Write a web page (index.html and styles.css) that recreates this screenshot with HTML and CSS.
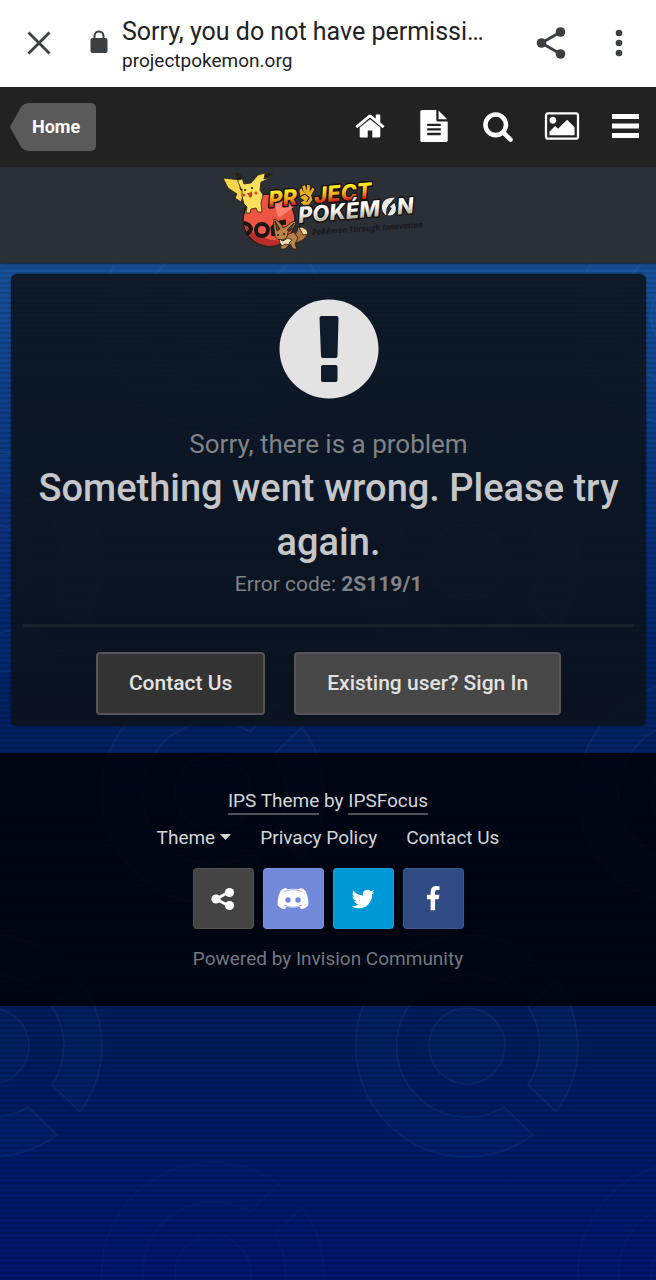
FILE: index.html
```html
<!DOCTYPE html>
<html lang="en">
<head>
<meta charset="utf-8">
<meta name="viewport" content="width=device-width, initial-scale=1">
<title>Sorry, you do not have permission</title>
<link rel="stylesheet" href="styles.css">
</head>
<body>
<header class="browser-bar">
  <button class="bar-button" aria-label="Close"><svg width="24" height="24" viewBox="0 0 24 24"><path d="M1.500 1.500 22.500 22.500M22.500 1.500 1.500 22.500" stroke="currentColor" stroke-width="2.800"/></svg></button>
  <svg class="lock" width="18" height="24" viewBox="0 0 18 24"><rect x="0.500" y="8" width="17" height="15" rx="2" fill="currentColor"/><path d="M4.500 9V6a4.500 4.500 0 0 1 9 0v3" fill="none" stroke="currentColor" stroke-width="2"/></svg>
  <div class="address">
    <span class="page-title">Sorry, you do not have permissi…</span>
    <span class="page-host">projectpokemon.org</span>
  </div>
  <button class="bar-button share" aria-label="Share"><svg width="30" height="34" viewBox="0 0 30 34" fill="currentColor"><path d="M5.500 17 24.500 6M5.500 17 24.500 28" stroke="currentColor" stroke-width="2.800"/><circle cx="5.500" cy="17" r="4.800"/><circle cx="24.500" cy="6" r="4.800"/><circle cx="24.500" cy="28" r="4.800"/></svg></button>
  <button class="bar-button" aria-label="More options"><svg width="8" height="28" viewBox="0 0 8 28" fill="currentColor"><circle cx="4" cy="4" r="3.300"/><circle cx="4" cy="14" r="3.300"/><circle cx="4" cy="24" r="3.300"/></svg></button>
</header>
<div class="site">
  <svg class="pattern" aria-hidden="true">
    <defs>
      <g id="ball">
        <circle r="38"/>
        <path d="M37 61 66 89A111 111 0 1 1 66-89L37-61A71 71 0 1 0 37 61Z"/>
        <path d="M61 39 89 66A111 111 0 0 0 89-66L61-39A71 71 0 0 1 61 39Z"/>
      </g>
    </defs>
    <use href="#ball" x="213" y="229"/><use href="#ball" x="689" y="229"/>
    <use href="#ball" x="-9" y="475"/><use href="#ball" x="467" y="475"/>
    <use href="#ball" x="213" y="706"/><use href="#ball" x="689" y="706"/>
    <use href="#ball" x="-9" y="959"/><use href="#ball" x="467" y="959"/>
    <use href="#ball" x="213" y="1186" class="faint"/><use href="#ball" x="689" y="1186" class="faint"/>
  </svg>
  <nav class="site-nav">
    <a class="home-link" href="#"><svg width="22" height="48" viewBox="0 0 22 48"><path d="M22 0H20Q14 0 11 4L0 24 11 44Q14 48 20 48H22Z" fill="#5a5a5a"/></svg><span>Home</span></a>
    <div class="nav-icons">
      <a href="#" aria-label="Home"><svg width="32" height="32" viewBox="0 0 1792 1792"><path d="M1472 992v480q0 26-19 45t-45 19h-384v-384h-256v384h-384q-26 0-45-19t-19-45v-480q0-1 .5-3t.5-3l575-474 575 474q1 2 1 6zm223-69l-62 74q-8 9-21 11h-3q-13 0-21-7l-692-577-692 577q-12 8-24 7-13-2-21-11l-62-74q-8-10-7-23.500t11-21.500l719-599q32-26 76-26t76 26l244 204v-195q0-14 9-23t23-9h192q14 0 23 9t9 23v408l219 182q10 8 11 21.500t-7 23.500z"/></svg></a>
      <a href="#" aria-label="Articles"><svg width="32" height="32" viewBox="0 0 1792 1792"><path d="M1596 476q14 14 28 36h-472v-472q22 14 36 28zm-476 164h544v1056q0 40-28 68t-68 28h-1344q-40 0-68-28t-28-68v-1600q0-40 28-68t68-28h800v544q0 40 28 68t68 28zm160 736v-64q0-14-9-23t-23-9h-704q-14 0-23 9t-9 23v64q0 14 9 23t23 9h704q14 0 23-9t9-23zm0-256v-64q0-14-9-23t-23-9h-704q-14 0-23 9t-9 23v64q0 14 9 23t23 9h704q14 0 23-9t9-23zm0-256v-64q0-14-9-23t-23-9h-704q-14 0-23 9t-9 23v64q0 14 9 23t23 9h704q14 0 23-9t9-23z"/></svg></a>
      <a href="#" aria-label="Search"><svg width="32" height="32" viewBox="0 0 1792 1792"><path d="M1216 832q0-185-131.500-316.500t-316.500-131.500-316.500 131.500-131.500 316.500 131.500 316.500 316.500 131.500 316.500-131.500 131.500-316.500zm512 832q0 52-38 90t-90 38q-54 0-90-38l-343-342q-179 124-399 124-143 0-273.500-55.500t-225-150-150-225-55.500-273.500 55.500-273.500 150-225 225-150 273.500-55.500 273.500 55.500 225 150 150 225 55.500 273.500q0 220-124 399l343 343q37 37 37 90z"/></svg></a>
      <a href="#" aria-label="Gallery"><svg width="36" height="32" viewBox="-112 0 2016 1792"><path d="M576 576q0 80-56 136t-136 56-136-56-56-136 56-136 136-56 136 56 56 136zm1024 384v448h-1408v-192l320-320 160 160 512-512zm96-704h-1600q-13 0-22.500 9.500t-9.500 22.500v1216q0 13 9.500 22.500t22.500 9.500h1600q13 0 22.500-9.500t9.500-22.500v-1216q0-13-9.500-22.500t-22.500-9.500zm160 32v1216q0 66-47 113t-113 47h-1600q-66 0-113-47t-47-113v-1216q0-66 47-113t113-47h1600q66 0 113 47t47 113z"/></svg></a>
      <a href="#" aria-label="Menu"><svg width="28" height="32" viewBox="0 0 28 32"><path d="M0 4h27v5H0zM0 13.500h27v5H0zM0 23h27v5H0z"/></svg></a>
    </div>
  </nav>
  <div class="brand">
    <a href="#" aria-label="Project Pokémon">
    <svg class="logo" width="204" height="84" viewBox="226 166 204 84">
      <defs>
        <linearGradient id="fire" x1="0" y1="0" x2="0" y2="1"><stop offset=".25" stop-color="#ffe91f"/><stop offset=".55" stop-color="#f3a01d"/><stop offset=".8" stop-color="#c51f18"/></linearGradient>
        <linearGradient id="steel" x1="0" y1="0" x2="0" y2="1"><stop offset=".4" stop-color="#fff"/><stop offset=".85" stop-color="#a9a98f"/></linearGradient>
      </defs>
      <ellipse cx="269" cy="219" rx="26" ry="26" fill="#ee5442" stroke="#251b1b" stroke-width="1.500"/>
      <path d="M244 220q3 22 24 25 12 0 18-6-16 2-24-4-14-2-18-15z" fill="#b92d2d"/>
      <path d="M276 194l12-3q7 6 7 14l-16 12q-5-8-3-23z" fill="#ff806c"/>
      <path d="M244 222q6 1 7 6-1 4-5 5" fill="none" stroke="#171717" stroke-width="4"/>
      <path d="M286 221q-10 1-13 6l1 8" fill="none" stroke="#171717" stroke-width="5"/>
      <circle cx="262" cy="229" r="6" fill="#f15a48" stroke="#171717" stroke-width="4"/>
      <g transform="translate(-2 2)">
        <g stroke="#28200f" stroke-width=".8" stroke-linejoin="round">
          <path d="M243 199l-6-4 2-4-9-6-5-10 18 2-1 9 4 4-3 9z" fill="#f7d64b"/>
          <path d="M243 186q-3-6-5-15 6 1 8 10l7-1 7-8q6-3 14-1-2 5-11 8l-1 8 3 5-2 8 1 9h-4l-2-4-5 1-1 4h-4l1-6-3-3q-3-8-2-15z" fill="#f9df5b"/>
          <path d="M238 170q5 0 6 6l-4 1zM267 171l8-1-5 5-4 1z" fill="#222"/>
        </g>
        <circle cx="247" cy="187" r="1.100" fill="#222"/><circle cx="254" cy="185" r="1.100" fill="#222"/><circle cx="246" cy="192" r="1.500" fill="#d9492b"/><circle cx="258" cy="190" r="1.500" fill="#d9492b"/><path d="M249 190q4 0 5-2 1 6-2 7z" fill="#b8413e"/>
      </g>
      <g class="wordmark" transform="rotate(-5 272 207)">
        <text x="269" y="206" class="word" fill="url(#fire)">PR</text>
        <text x="315" y="206" class="word" fill="url(#fire)">JECT</text>
        <path d="M301 195q-1-4 2-5l2 4-1-6 3-1 1 6 1-6 3 1-1 6 3-4 2 2-4 6 1 4-4 5h-5l-3-3 4-2q-4-2-4-4z" fill="#e7ae28" stroke="#19130c" stroke-width="1.200"/>
        <path d="M301 198l5-2 4 4-3 4" fill="none" stroke="#19130c" stroke-width="1"/>
      </g>
      <g class="wordmark" transform="rotate(-5 300 224)">
        <text x="299" y="222" class="word" fill="url(#steel)">POKÉM</text>
        <text x="398" y="222" class="word" fill="url(#steel)">N</text>
        <path d="M397 205q-13-1-14 9 0 5 4 8-1-8 5-12zM396 210l-5 4 2 1-5 7q9 2 9-7z" fill="#e9e9e4" stroke="#17171b" stroke-width="1.300"/>
      </g>
      <text x="312" y="234" transform="rotate(-4 312 234)" class="tagline">Pokémon Through Innovation</text>
      <g stroke="#251a11" stroke-width=".8" stroke-linejoin="round">
        <path d="M293 235q4-2 5-9 8 0 10 7-5 8-13 9z" fill="#a87543"/><path d="M299 226q8 0 9 7l-5 1z" fill="#eed5a3"/>
        <path d="M284 235l10-4 4 6-3 6 2 5h-4l-3-5-5 5h-5l3-8z" fill="#b88149"/>
        <path d="M275 234q-2-9-1-16 6 2 9 9l4-2q4-5 9-5-1 8-8 11 0 7-6 8-7 0-7-5z" fill="#b9824b"/>
        <path d="M275 220l5 8-3 2zM294 222l-7 7 3 1z" fill="#5b3824"/>
        <path d="M279 238l4 2 5-3 4 2-3 3 1 2-5-1-3 2-2-3z" fill="#f2dfb8"/>
      </g>
      <circle cx="278" cy="234" r="1" fill="#1b1510"/><circle cx="284" cy="233" r="1" fill="#1b1510"/>
    </svg></a>
  </div>
  <main class="error-card">
    <svg class="alert" width="100" height="100" viewBox="0 0 100 100"><circle cx="50" cy="50" r="49.500" fill="#e3e3e3"/><path d="M42.500 17H57.500Q59.500 17 59.500 19L58.500 57Q58.500 59 56.500 59H44Q42 59 42 57L40.500 19Q40.500 17 42.500 17Z" fill="#0f1b2a"/><rect x="42" y="66" width="16.500" height="17" rx="2" fill="#0f1b2a"/></svg>
    <p class="problem">Sorry, there is a problem</p>
    <h1 class="message">Something went wrong. Please try again.</h1>
    <p class="code">Error code: <strong>2S119/1</strong></p>
    <hr class="divider">
    <div class="actions">
      <a class="button contact" href="#">Contact Us</a>
      <a class="button sign-in" href="#">Existing user? Sign In</a>
    </div>
  </main>
  <footer class="site-footer">
    <p class="credit"><a href="#">IPS Theme</a> by <a href="#">IPSFocus</a></p>
    <div class="footer-links"><a href="#">Theme <svg width="11" height="8" viewBox="0 0 11 8"><path d="M0 0h11L5.500 6z" fill="currentColor"/></svg></a><a href="#">Privacy Policy</a><a href="#">Contact Us</a></div>
    <div class="social">
      <a class="share-tile" href="#" aria-label="Share"><svg width="24" height="24" viewBox="0 0 24 24"><path d="M5 12 18 5M5 12l13 7" stroke="#fff" stroke-width="3"/><circle cx="5" cy="12" r="4.600"/><circle cx="18.500" cy="5.500" r="4.600"/><circle cx="18.500" cy="18.500" r="4.600"/></svg></a>
      <a class="discord" href="#" aria-label="Discord"><svg width="32" height="24" viewBox="0 0 32 24"><path d="M9 1Q5 1.500 3.500 4 0 11 .8 18.500 4 22 8 22L9.500 19.800Q16 21.500 22.500 19.800L24 22Q28 22 31.200 18.500 32 11 28.500 4 27 1.500 23 1L22 2.200Q16 1.200 10 2.200Z"/><g fill="#7289da"><circle cx="11" cy="13" r="2.700"/><circle cx="21" cy="13" r="2.700"/></g><path d="M7.500 4.500Q16 1 24.500 4.500M7 18Q16 22.500 25 18" fill="none" stroke="#7289da" stroke-width=".7"/></svg></a>
      <a class="twitter" href="#" aria-label="Twitter"><svg width="26" height="26" viewBox="0 0 1792 1792"><path d="M1684 408q-67 98-162 167 1 14 1 42 0 130-38 259.500t-115.500 248.500-184.500 210.500-258 146-323 54.500q-271 0-496-145 35 4 78 4 225 0 401-138-105-2-188-64.500t-114-159.500q33 5 61 5 43 0 85-11-112-23-185.500-111.500t-73.500-205.500v-4q68 38 146 41-66-44-105-115t-39-154q0-88 44-163 121 149 294.500 238.500t371.500 99.500q-8-38-8-74 0-134 94.500-228.500t228.500-94.500q140 0 236 102 109-21 205-78-37 115-142 178 93-10 186-50z"/></svg></a>
      <a class="facebook" href="#" aria-label="Facebook"><svg width="26" height="26" viewBox="0 0 1792 1792"><path d="M1343 12v264h-157q-86 0-116 36t-30 108v189h293l-39 296h-254v759h-306v-759h-255v-296h255v-218q0-186 104-288.500t277-102.500q147 0 228 12z"/></svg></a>
    </div>
    <a class="powered" href="#">Powered by Invision Community</a>
  </footer>
</div>
</body>
</html>
```
FILE: styles.css
```css
* { box-sizing: border-box; }
body {
  margin: 0;
  min-height: 100vh;
  display: flex;
  flex-direction: column;
  font-family: Roboto, "Liberation Sans", sans-serif;
  font-size: 19px;
  line-height: 24px;
  background: #00156c;
}
a { color: inherit; text-decoration: none; }
svg { display: block; flex: none; }
p, h1 { margin: 0; }

.browser-bar {
  min-height: 87px;
  display: flex;
  align-items: center;
  padding: 0 22px 2px 24px;
  background: #fff;
  color: #3c4043;
}
.bar-button {
  display: grid;
  place-items: center;
  min-width: 30px;
  height: 48px;
  padding: 0;
  border: 0;
  background: none;
  color: inherit;
}
.lock { margin: 0 14px 2px 36px; }
.address { flex: 1; min-width: 0; display: flex; flex-direction: column; padding-top: 4px; color: #202124; }
.page-title { font-size: 25px; line-height: 32px; white-space: nowrap; }
.page-host { font-size: 19px; line-height: 26px; }
.share { margin-right: 38px; }

.site {
  position: relative;
  flex: 1;
  isolation: isolate;
  background:
    repeating-linear-gradient(rgba(0, 0, 0, .13) 0 2px, transparent 2px 5px),
    linear-gradient(#1c559f 0, #19509a 180px, #10408a 300px, #07296f 500px, #002060 640px, #001c5c 960px, #001a68 1080px, #00156c 1190px);
}
.pattern {
  position: absolute;
  inset: 0;
  width: 100%;
  height: 100%;
  z-index: -1;
  fill: rgba(60, 140, 220, .03);
  stroke: rgba(90, 160, 230, .08);
  stroke-width: 2;
}
.faint { opacity: .4; }

.site-nav {
  height: 80px;
  display: flex;
  align-items: center;
  justify-content: space-between;
  padding: 0 12px 0 10px;
  background: #222;
}
.home-link { display: flex; color: #fff; font-size: 18px; font-weight: 700; line-height: 48px; }
.home-link span { padding-right: 16px; background: #5a5a5a; border-radius: 0 5px 5px 0; }
.nav-icons { display: flex; gap: 28px; padding-bottom: 2px; }
.nav-icons a { width: 36px; display: grid; place-items: center; fill: #fff; }

.brand {
  height: 96px;
  display: flex;
  justify-content: center;
  background: #2b2f36;
  box-shadow: 0 1px 3px rgba(0, 0, 0, .5);
}
.logo { overflow: visible; }
.word { font: italic 800 22px Inter, sans-serif; }
.wordmark { stroke: #1a1111; stroke-width: 3px; paint-order: stroke; stroke-linejoin: round; }
.tagline { font: italic 700 8px "Open Sans", sans-serif; fill: #17191e; }

.error-card {
  margin: 11px 10px 27px 11px;
  padding: 25px 12px 11px;
  border-radius: 6px;
  background: rgba(13, 18, 23, .86);
  box-shadow: 0 0 2px rgba(0, 0, 0, .6);
  text-align: center;
  color: #808388;
}
.alert { margin: 0 auto 28px; }
.problem { font-size: 26px; line-height: 34px; }
.message { font-size: 38px; line-height: 54px; font-weight: 500; color: #c4c6c8; }
.code { font-size: 21px; line-height: 30px; }
.divider { height: 3px; margin: 25px 0; border: 0; background: #18202c; }
.actions { display: flex; justify-content: center; flex-wrap: wrap; gap: 29px; }
.button {
  padding: 17px 31px;
  border: 2px solid #54565a;
  border-radius: 4px;
  font-size: 21px;
  line-height: 25px;
  font-weight: 500;
  color: #e2e2e2;
}
.contact { background: #333; }
.sign-in { background: #474747; }

.site-footer {
  display: flex;
  flex-direction: column;
  align-items: center;
  padding: 36px 12px 35px;
  background: rgba(0, 0, 4, .82);
  color: #d4d6da;
}
.credit { margin-bottom: 11px; }
.credit a { display: inline-block; border-bottom: 2px solid #4d5159; }
.footer-links { display: flex; gap: 29px; margin-bottom: 18px; }
.footer-links a { display: flex; align-items: center; gap: 5px; }
.social { display: flex; gap: 9px; margin-bottom: 18px; }
.social a {
  width: 61px;
  height: 61px;
  display: grid;
  place-items: center;
  border-radius: 4px;
  fill: #fff;
  box-shadow: inset 0 0 0 1px rgba(255, 255, 255, .08);
}
.share-tile { background: #444; }
.discord { background: #7289da; }
.twitter { background: #0098d4; }
.facebook { background: #2f4a85; }
.powered { color: #747880; }
```
